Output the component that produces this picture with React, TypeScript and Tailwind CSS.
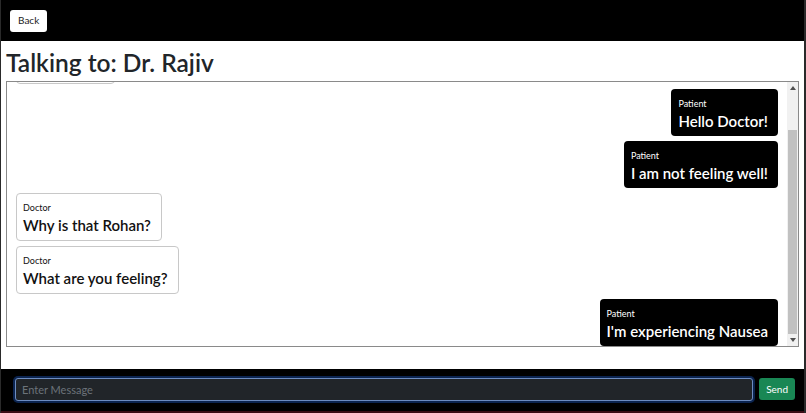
import React from 'react';

type Msg = { from: 'Patient' | 'Doctor'; text: string };

const messages: Msg[] = [
  { from: 'Doctor', text: 'Hello Rohan' },
  { from: 'Patient', text: 'Hello Doctor!' },
  { from: 'Patient', text: 'I am not feeling well!' },
  { from: 'Doctor', text: 'Why is that Rohan?' },
  { from: 'Doctor', text: 'What are you feeling?' },
  { from: 'Patient', text: "I'm experiencing Nausea" },
];

function Bubble({ msg }: { msg: Msg }) {
  const mine = msg.from === 'Patient';
  return (
    <div className={mine ? 'flex justify-end' : 'flex justify-start'}>
      <div
        className={
          mine
            ? 'rounded-[4px] bg-black text-white pt-[9px] pb-[4px] pl-[7px] pr-[10px]'
            : 'rounded-[4px] bg-white text-[#111] border border-[#c8c8c8] pt-[8px] pb-[4px] pl-[6px] pr-[10px]'
        }
      >
        <div className="text-[9px] leading-[12px]">{msg.from}</div>
        <div className="text-[15px] leading-[22px] font-semibold">{msg.text}</div>
      </div>
    </div>
  );
}

function Scrollbar() {
  return (
    <div className="w-[11px] shrink-0 bg-[#f1f1f1] flex flex-col items-center">
      <div className="h-[12px] flex items-center justify-center">
        <div className="w-0 h-0 border-l-[3px] border-r-[3px] border-b-[4px] border-l-transparent border-r-transparent border-b-[#505050]" />
      </div>
      <div className="h-[36px]" />
      <div className="w-[9px] flex-1 bg-[#c1c1c1]" />
      <div className="h-[12px] flex items-center justify-center">
        <div className="w-0 h-0 border-l-[3px] border-r-[3px] border-t-[4px] border-l-transparent border-r-transparent border-t-[#505050]" />
      </div>
    </div>
  );
}

export default function App() {
  return (
    <div
      className="w-[806px] h-[413px] flex flex-col bg-white border-l border-r-2 border-[#2a2a2a] overflow-hidden"
      style={{ fontFamily: 'Lato, "Noto Sans", sans-serif' }}
    >
      <div className="h-[41px] shrink-0 bg-black flex items-center pl-[9px]">
        <button className="h-[22px] px-[8px] bg-white rounded-[3px] text-[10px] text-[#222]">Back</button>
      </div>

      <div className="px-[5px] pt-[5px] pb-[1px]">
        <h1 className="text-[24.5px] leading-[34px] font-semibold text-[#212529]">Talking to: Dr. Rajiv</h1>
      </div>

      <div className="mx-[5px] h-[266px] shrink-0 border border-[#8a8a8a] flex">
        <div className="flex-1 overflow-hidden flex flex-col justify-end gap-[5px] pl-[9px] pr-[9px]">
          {messages.map((m, i) => (
            <Bubble key={i} msg={m} />
          ))}
        </div>
        <Scrollbar />
      </div>

      <div className="h-[22px] shrink-0" />

      <div className="flex-1 bg-black flex items-center gap-[6px] pl-[14px] pr-[9px] pb-[2px]">
        <input
          className="flex-1 h-[23px] bg-[#212529] border border-[#6d8cc0] rounded-[3px] ring-[2px] ring-[#0b2450] px-[6px] text-[11px] text-white placeholder:text-[#6c737a] outline-none"
          placeholder="Enter Message"
        />
        <button className="h-[22px] px-[7px] bg-[#198754] rounded-[3px] text-[10px] text-white">Send</button>
      </div>
      <div className="h-[2px] shrink-0 bg-[#3a0c14]" />
    </div>
  );
}
